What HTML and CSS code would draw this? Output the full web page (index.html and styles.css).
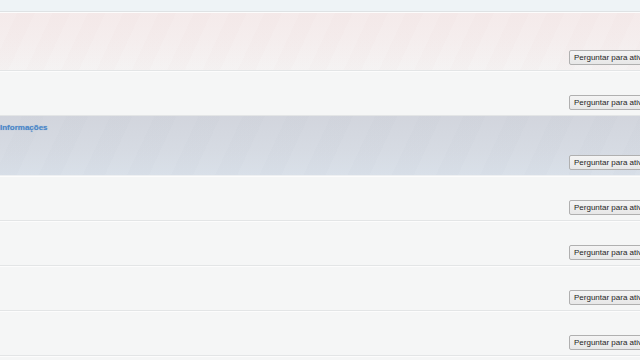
FILE: index.html
```html
<!DOCTYPE html>
<html lang="pt">
<head>
<meta charset="utf-8">
<title>Plugins</title>
<link rel="stylesheet" href="styles.css">
</head>
<body>
<div class="list">
  <div class="topband"></div>
  <div class="row tall pink"><button class="ask">Perguntar para ativar</button></div>
  <div class="row"><button class="ask">Perguntar para ativar</button></div>
  <div class="row tall selected">
    <a class="info" href="#">Informações</a>
    <button class="ask">Perguntar para ativar</button>
  </div>
  <div class="row"><button class="ask">Perguntar para ativar</button></div>
  <div class="row"><button class="ask">Perguntar para ativar</button></div>
  <div class="row"><button class="ask">Perguntar para ativar</button></div>
  <div class="row"><button class="ask">Perguntar para ativar</button></div>
  <div class="row"></div>
</div>
</body>
</html>
```

FILE: styles.css
```css
html, body {
  margin: 0;
  padding: 0;
  background: #f6f7f7;
  overflow: hidden;
}
.list {
  width: 640px;
  height: 360px;
  overflow: hidden;
  display: flex;
  flex-direction: column;
  font-family: "Liberation Sans", Arial, sans-serif;
}
.topband {
  flex: none;
  box-sizing: border-box;
  height: 12px;
  background: #eef3f6;
  border-bottom: 1px solid #dfe2e4;
}
.row {
  flex: none;
  box-sizing: border-box;
  height: 45px;
  position: relative;
  display: flex;
  align-items: flex-end;
  padding: 0 0 5px 569px;
  background: #f5f6f6;
  border-bottom: 1px solid #e3e5e6;
  box-shadow: inset 0 1px 0 #fcfcfc;
}
.row.tall {
  height: 59px;
}
.row.pink {
  background:
    repeating-linear-gradient(115deg, rgba(255,255,255,0.05) 0 16px, rgba(236,214,214,0.05) 16px 32px),
    linear-gradient(#f4e9e9, #f4eded 55%, #f4f2f2);
}
.row.selected {
  height: 60px;
  background:
    repeating-linear-gradient(115deg, rgba(255,255,255,0.03) 0 20px, rgba(190,198,210,0.04) 20px 40px),
    linear-gradient(#d1d4dc, #d5dae2 60%, #d8dfe8);
  border-bottom: 1px solid #eef0f2;
  box-shadow: none;
}
.info {
  position: absolute;
  left: 0;
  top: 7px;
  font-family: "Liberation Sans", Arial, sans-serif;
  font-size: 8px;
  font-weight: bold;
  color: #4a86c8;
  text-decoration: none;
  text-shadow: 0 0 1px rgba(74,134,200,0.5);
}
.ask {
  flex: none;
  box-sizing: border-box;
  height: 15px;
  width: 90px;
  margin: 0;
  padding: 0 0 0 4px;
  text-align: left;
  font-family: "Liberation Sans", Arial, sans-serif;
  font-size: 8px;
  line-height: 13px;
  color: #1e1e1e;
  background: linear-gradient(#f4f4f4, #e7e7e7);
  border: 1px solid #b0b0b0;
  border-radius: 2px;
  white-space: nowrap;
  overflow: hidden;
}
```
